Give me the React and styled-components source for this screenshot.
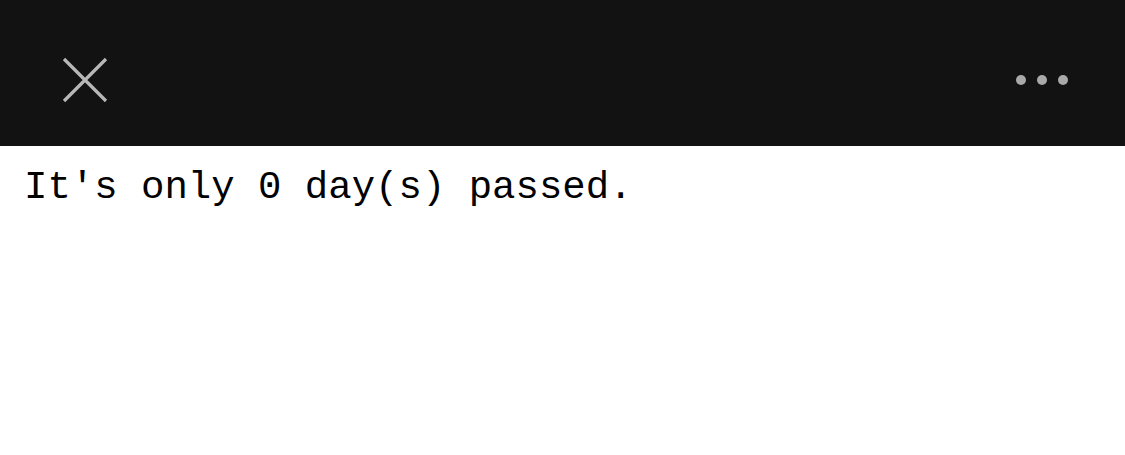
import React from 'react'
import styled, { createGlobalStyle } from 'styled-components'

const GlobalStyle = createGlobalStyle`
  html, body {
    margin: 0;
    padding: 0;
    background: #fff;
  }
`

const Page = () => {
  const days = 0

  return (
    <Wrapper>
      <GlobalStyle />
      <TopBar>
        <IconButton aria-label="close">
          <svg width="46" height="46" viewBox="0 0 46 46">
            <path d="M2 2 L44 44 M44 2 L2 44" stroke="#b8b8b8" strokeWidth="3.2" strokeLinecap="butt" />
          </svg>
        </IconButton>
        <IconButton aria-label="more">
          <Dots>
            <Dot />
            <Dot />
            <Dot />
          </Dots>
        </IconButton>
      </TopBar>
      <Message>It's only {days} day(s) passed.</Message>
    </Wrapper>
  )
}

export default Page

const Wrapper = styled.div`
  width: 1125px;
  min-height: 455px;
  background: #fff;
`

const TopBar = styled.header`
  height: 146px;
  background: #121212;
  display: flex;
  justify-content: space-between;
  align-items: flex-start;
  padding: 57px 57px 0 62px;
  box-sizing: border-box;
`

const IconButton = styled.button`
  border: none;
  background: none;
  padding: 0;
  height: 46px;
  display: flex;
  align-items: center;
  cursor: pointer;
`

const Dots = styled.div`
  display: flex;
  gap: 11px;
`

const Dot = styled.span`
  width: 10px;
  height: 10px;
  border-radius: 50%;
  background: #a9a9a9;
`

const Message = styled.p`
  margin: 0;
  padding: 20px 24px;
  font-family: "Liberation Mono", "Courier New", monospace;
  font-size: 39px;
  color: #000;
`
